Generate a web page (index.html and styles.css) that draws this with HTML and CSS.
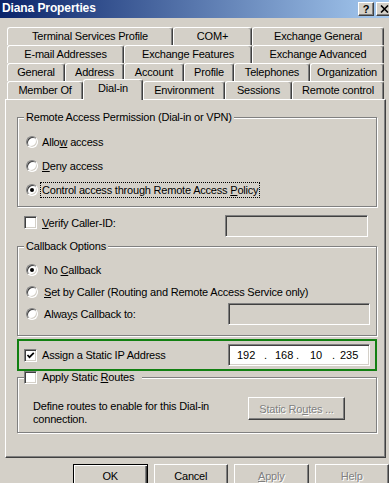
FILE: index.html
```html
<!DOCTYPE html>
<html lang="en">
    <head>
        <title>Diana Properties</title>
        <link rel="stylesheet" href="styles.css">
    </head>
    <body>
        <div class="titlebar">
            <span class="title">Diana Properties</span>
            <div class="caption-btns">
                <span class="cap-btn">?</span>
                <span class="cap-btn">
                    <svg width="9" height="8" viewBox="0 0 9 8"><path d="M1 0.5 L8 7.5 M8 0.5 L1 7.5" stroke="#000" stroke-width="1.6"/></svg>
                </span>
            </div>
        </div>

        <div class="tabs">
            <div class="tab-row row-1">
                <div class="tab">Terminal Services Profile</div>
                <div class="tab">COM+</div>
                <div class="tab">Exchange General</div>
            </div>
            <div class="tab-row row-2">
                <div class="tab">E-mail Addresses</div>
                <div class="tab">Exchange Features</div>
                <div class="tab">Exchange Advanced</div>
            </div>
            <div class="tab-row row-3">
                <div class="tab">General</div>
                <div class="tab">Address</div>
                <div class="tab">Account</div>
                <div class="tab">Profile</div>
                <div class="tab">Telephones</div>
                <div class="tab">Organization</div>
            </div>
            <div class="tab-row row-4">
                <div class="tab">Member Of</div>
                <div class="tab active">Dial-in</div>
                <div class="tab">Environment</div>
                <div class="tab">Sessions</div>
                <div class="tab">Remote control</div>
            </div>
        </div>

        <div class="panel">
            <fieldset class="group">
                <legend>Remote Access Permission (Dial-in or VPN)</legend>
                <div class="group-body perm">
                    <div class="opt"><span class="radio"></span><span>Allo<u>w</u> access</span></div>
                    <div class="opt"><span class="radio"></span><span><u>D</u>eny access</span></div>
                    <div class="opt"><span class="radio on"></span><span class="focus">Control access through Remote Access <u>P</u>olicy</span></div>
                </div>
            </fieldset>

            <div class="field-row">
                <div class="check-label"><span class="check"></span><span><u>V</u>erify Caller-ID:</span></div>
                <div class="textbox caller"></div>
            </div>

            <fieldset class="group callback">
                <legend>Callback Options</legend>
                <div class="group-body cb">
                    <div class="opt"><span class="radio on"></span><span>No <u>C</u>allback</span></div>
                    <div class="opt"><span class="radio"></span><span><u>S</u>et by Caller (Routing and Remote Access Service only)</span></div>
                    <div class="opt"><span class="radio"></span><span>Alwa<u>y</u>s Callback to:</span><div class="textbox cbnum"></div></div>
                </div>
            </fieldset>

            <div class="static-ip">
                <div class="check-label"><span class="check on">
                    <svg width="9" height="9" viewBox="0 0 9 9"><path d="M1.5 4 L3.5 6.2 L7.8 1.8" fill="none" stroke="#000" stroke-width="1.7"/></svg>
                </span><span>Assign a Static IP Address</span></div>
                <div class="ipbox">
                    <span>192</span><span>.</span><span>168</span><span>.</span><span>10</span><span>.</span><span>235</span>
                </div>
            </div>

            <fieldset class="group routes">
                <legend><span class="check"></span><span>Apply Static <u>R</u>outes</span></legend>
                <div class="group-body rt">
                    <p class="note">Define routes to enable for this Dial-in<br>connection.</p>
                    <div class="btn disabled wide">Static Ro<u>u</u>tes ...</div>
                </div>
            </fieldset>
        </div>

        <div class="buttons">
            <div class="btn default">OK</div>
            <div class="btn">Cancel</div>
            <div class="btn disabled"><u>A</u>pply</div>
            <div class="btn disabled">Help</div>
        </div>
    </body>
</html>
```

FILE: styles.css
```css
* {
    box-sizing: border-box;
}

body {
    margin: 0;
    width: 389px;
    height: 483px;
    overflow: hidden;
    background-color: #d4d0c8;
    font-family: "Liberation Sans", Arial, sans-serif;
    font-size: 11px;
    letter-spacing: -0.2px;
    color: #000;
}

/* title bar */
.titlebar {
    height: 18px;
    display: flex;
    justify-content: space-between;
    background: linear-gradient(to right, #0a246a, #a6caf0);
    color: #fff;
    padding-left: 2px;
}

.title {
    font-weight: bold;
    font-size: 12px;
    line-height: 17px;
    letter-spacing: -0.1px;
}

.caption-btns {
    display: flex;
    gap: 2px;
    margin-top: 2px;
    margin-right: -3px;
}

.cap-btn {
    width: 16px;
    height: 14px;
    display: flex;
    align-items: center;
    justify-content: center;
    background-color: #d4d0c8;
    color: #000;
    font-weight: bold;
    font-size: 11px;
    border: 1px solid;
    border-color: #fff #404040 #404040 #fff;
    box-shadow: inset -1px -1px #808080;
}

/* tabs */
.tabs {
    padding: 9px 0 0 7px;
}

.tab-row {
    display: grid;
    height: 18px;
}

.row-1 { grid-template-columns: 166px 79px 132px; }
.row-2 { grid-template-columns: 117px 128px 132px; }
.row-3 { grid-template-columns: 58px 59px 60px 50px 76px 74px; }
.row-4 { grid-template-columns: 76px 60px 82px 67px 92px; }

.tab {
    height: 18px;
    border-top: 1px solid #fff;
    border-left: 1px solid #fff;
    border-right: 1px solid #404040;
    box-shadow: inset -1px 0 #808080;
    border-radius: 3px 3px 0 0;
    text-align: center;
    line-height: 16px;
    white-space: nowrap;
    background-color: #d4d0c8;
}

.tab.active {
    height: 21px;
    margin-top: -2px;
    position: relative;
    z-index: 1;
}

/* tab page */
.panel {
    margin-left: 5px;
    width: 381px;
    height: 359px;
    border: 1px solid;
    border-color: #fff #404040 #404040 #fff;
    box-shadow: inset -1px -1px #808080;
    padding: 11px 8px 0 11px;
}

.group {
    margin: 0;
    padding: 0;
    min-width: 0;
    border: 1px solid #808080;
    box-shadow: inset 1px 1px #fff, 1px 1px #fff;
}

.group legend {
    margin-left: 6px;
    padding: 0 2px;
    line-height: 13px;
    background-color: #d4d0c8;
}

.group-body {
    padding: 6px 6px 4px 8px;
}

.opt {
    display: flex;
    align-items: center;
    height: 24px;
    gap: 4px;
}

.cb {
    padding-bottom: 10px;
}

.cb .opt {
    height: 22px;
    gap: 6px;
}

.radio {
    flex: none;
    width: 12px;
    height: 12px;
    border-radius: 50%;
    background-color: #fff;
    border: 1px solid;
    border-color: #808080 #fff #fff #808080;
    box-shadow: inset 1px 1px #404040, inset -1px -1px #d4d0c8;
    display: flex;
    align-items: center;
    justify-content: center;
}

.radio.on::after {
    content: "";
    width: 4px;
    height: 4px;
    border-radius: 50%;
    background-color: #000;
}

.focus {
    outline: 1px dotted #000;
    padding: 1px 1px;
    margin-left: -1px;
}

.check {
    flex: none;
    width: 13px;
    height: 13px;
    background-color: #fff;
    border: 1px solid;
    border-color: #808080 #fff #fff #808080;
    box-shadow: inset 1px 1px #404040, inset -1px -1px #d4d0c8;
    display: flex;
    align-items: center;
    justify-content: center;
}

.check-label {
    display: flex;
    align-items: center;
    gap: 5px;
    height: 15px;
}

.field-row {
    display: flex;
    justify-content: space-between;
    align-items: flex-start;
    margin: 8px 0 3px;
    padding-left: 7px;
}

.textbox {
    height: 22px;
    border: 1px solid;
    border-color: #808080 #fff #fff #808080;
    box-shadow: inset 1px 1px #404040, inset -1px -1px #d4d0c8;
}

.caller {
    width: 143px;
    margin-right: 9px;
}

.cbnum {
    width: 142px;
    margin-left: auto;
}

/* static ip */
.static-ip {
    margin-top: 3px;
    height: 32px;
    border: 2px solid #128012;
    display: flex;
    align-items: center;
    justify-content: space-between;
    padding: 0 5px 0 5px;
}

.ipbox {
    width: 142px;
    height: 22px;
    background-color: #fff;
    border: 1px solid;
    border-color: #808080 #fff #fff #808080;
    box-shadow: inset 1px 1px #404040, inset -1px -1px #d4d0c8;
    display: grid;
    grid-template-columns: 27px 11px 21px 14px 22px 8px 1fr;
    align-items: center;
    padding-left: 8px;
    letter-spacing: 0;
}

/* static routes */
.routes legend {
    display: flex;
    align-items: center;
    gap: 5px;
    padding: 0 8px 0 0;
}

.rt {
    display: flex;
    align-items: flex-start;
    padding: 13px 0 6px 15px;
}

.note {
    margin: 3px 0 0;
    width: 215px;
    line-height: 13px;
}

/* buttons */
.btn {
    width: 75px;
    height: 23px;
    display: flex;
    align-items: center;
    justify-content: center;
    border: 1px solid;
    border-color: #fff #404040 #404040 #fff;
    box-shadow: inset -1px -1px #808080;
}

.btn.wide {
    width: 97px;
}

.btn.default {
    border-color: #000;
    box-shadow: inset 1px 1px #fff, inset -1px -1px #404040, inset -2px -2px #808080;
}

.btn.disabled {
    color: #808080;
    text-shadow: 1px 1px #fff;
}

.buttons {
    display: flex;
    gap: 6px;
    margin: 6px 0 0 73px;
}
```
